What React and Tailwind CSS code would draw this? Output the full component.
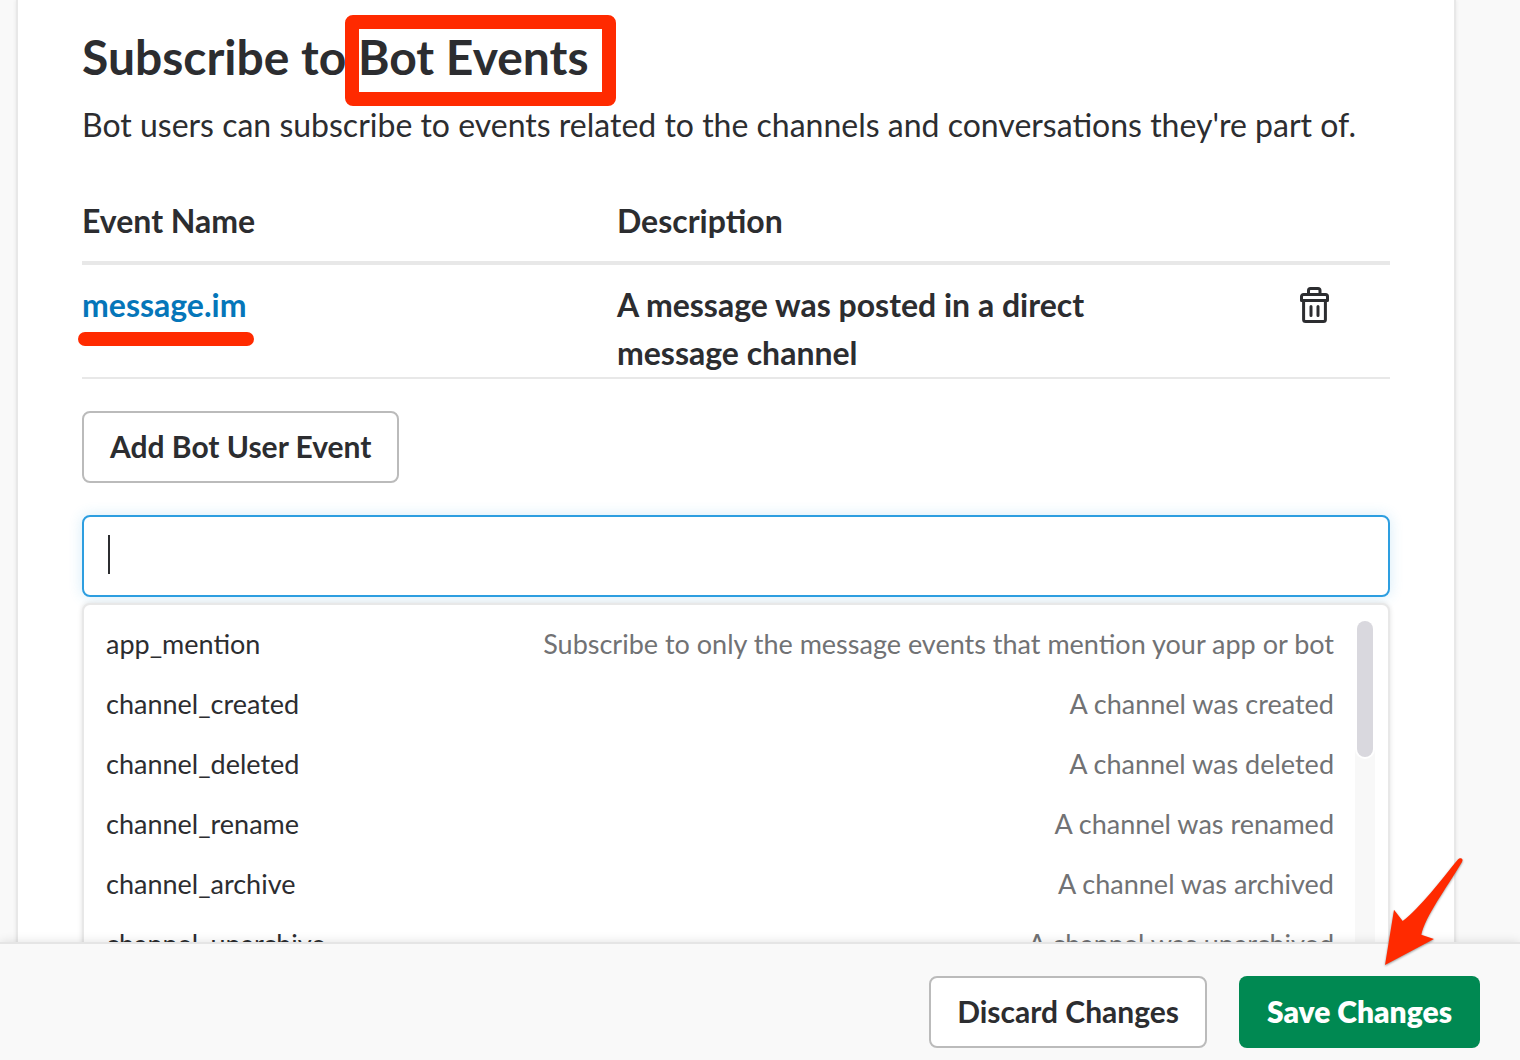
const EVENTS = [
  ["app_mention", "Subscribe to only the message events that mention your app or bot"],
  ["channel_created", "A channel was created"],
  ["channel_deleted", "A channel was deleted"],
  ["channel_rename", "A channel was renamed"],
  ["channel_archive", "A channel was archived"],
  ["channel_unarchive", "A channel was unarchived"],
];

function TrashIcon() {
  return (
    <svg width="30" height="36" viewBox="0 0 30 36" fill="none" stroke="currentColor" strokeWidth="3" strokeLinecap="round" strokeLinejoin="round" aria-hidden="true">
      <path d="M8.500 7V3.500a2 2 0 0 1 2-2h7.500a2 2 0 0 1 2 2V7" />
      <path d="M1.500 13.500V9.500a2 2 0 0 1 2-2h22a2 2 0 0 1 2 2v4z" />
      <path d="M3.600 14v18.500a2 2 0 0 0 2 2h17.800a2 2 0 0 0 2-2V14" />
      <path d="M11 19.500v9M18 19.500v9" />
    </svg>
  );
}

function Arrow() {
  return (
    <svg className="pointer-events-none absolute -top-[86px] right-10 overflow-visible drop-shadow-[0_1px_1px_rgba(0,0,0,0.4)]" width="96" height="110" viewBox="0 0 96 110" aria-hidden="true">
      <path fill="#ff2a00" d="M77.500 0.500C76 0 74.500 0.800 73.500 2C57 22 36 50 18.700 63L10 51.700L1 107L50 81L37.300 76.700C42 57 62 31 78 4C79 2 78.600 0.900 77.500 0.500Z" />
    </svg>
  );
}

const outlineButton =
  "h-[72px] rounded-lg border-2 border-[#bbbbbb] bg-white px-[26px] pb-0.5 text-[30px] leading-9 font-bold";

export default function App() {
  return (
    <div className="flex h-screen flex-col overflow-hidden bg-[#f9f9f9] font-[Lato,sans-serif] text-[#2c2d30]">
      <main className="min-h-0 flex-1 overflow-hidden pr-16 pl-4">
        <section className="min-h-full border-x-2 border-[#e8e8e8] bg-white px-16 pt-[27px] shadow-[0_0_4px_rgba(0,0,0,0.08)]">
          <h2 className="text-5xl leading-[60px] font-bold">
            Subscribe to{" "}
            <span className="relative inline-block">
              Bot Events
              <span className="pointer-events-none absolute -top-3 -right-[27px] -bottom-[19px] -left-[13px] rounded-lg border-[14px] border-[#ff2a00]" />
            </span>
          </h2>
          <p className="mt-3.5 text-[32px] leading-[48px]">
            Bot users can subscribe to events related to the channels and conversations they're part of.
          </p>

          <table className="mt-12 w-full table-fixed border-collapse text-left text-[32px] leading-[48px] font-bold">
            <thead>
              <tr className="border-b-4 border-[#e8e8e8]">
                <th className="w-[40.9%] p-0 pb-4 font-bold">Event Name</th>
                <th className="w-[42%] p-0 pb-4 font-bold">Description</th>
                <th aria-label="Actions" />
              </tr>
            </thead>
            <tbody>
              <tr className="border-b-2 border-[#e8e8e8] align-top">
                <td className="p-0 pt-4">
                  <a href="#message.im" className="relative inline-block text-[#0576b9]">
                    message.im
                    <span className="pointer-events-none absolute -right-2 -bottom-[17px] -left-1 h-[14px] rounded-full bg-[#ff2a00]" />
                  </a>
                </td>
                <td className="p-0 pt-4">A message was posted in a direct message channel</td>
                <td className="p-0 pt-[22px] pr-[60px]">
                  <button type="button" aria-label="Remove message.im" className="ml-auto block">
                    <TrashIcon />
                  </button>
                </td>
              </tr>
            </tbody>
          </table>

          <button type="button" className={`mt-8 block ${outlineButton}`}>Add Bot User Event</button>

          <div className="mt-8 flex h-[82px] items-center rounded-lg border-2 border-[#2d9ee0] bg-white pb-1 pl-6 shadow-[0_0_14px_rgba(45,158,224,0.2)]">
            <span className="h-[39px] w-0.5 bg-[#2c2d30]" />
            <input type="text" aria-label="Search bot events" className="h-full min-w-0 flex-1 bg-transparent text-[32px] caret-transparent outline-none" />
          </div>

          <div className="mt-1.5 flex rounded-t-lg border-2 border-[#e8e8e8] bg-white pr-[13px] pl-[22px] shadow-[0_0_5px_rgba(0,0,0,0.12)]">
            <ul className="min-w-0 flex-1 pt-[9px] text-[27px] leading-[60px]">
              {EVENTS.map(([name, description]) => (
                <li key={name} className="flex justify-between">
                  <span>{name}</span>
                  <span className="text-[#717274]">{description}</span>
                </li>
              ))}
            </ul>
            <div className="mt-4 ml-[21px] w-5 rounded-t-full bg-[#f8f8f8]">
              <div className="h-[138px] rounded-b-full bg-white px-0.5 pb-0.5">
                <div className="h-full rounded-full bg-[#d9d8de]" />
              </div>
            </div>
          </div>
        </section>
      </main>

      <footer className="relative flex justify-end gap-8 border-t-2 border-[#e5e5e5] bg-[#f9f9f9] px-10 pt-8 pb-3 shadow-[0_0_10px_rgba(0,0,0,0.12)]">
        <button type="button" className={outlineButton}>Discard Changes</button>
        <button type="button" className="h-[72px] rounded-lg bg-[#008952] px-7 pb-0.5 text-[30px] leading-9 font-extrabold text-white">
          Save Changes
        </button>
        <Arrow />
      </footer>
    </div>
  );
}
